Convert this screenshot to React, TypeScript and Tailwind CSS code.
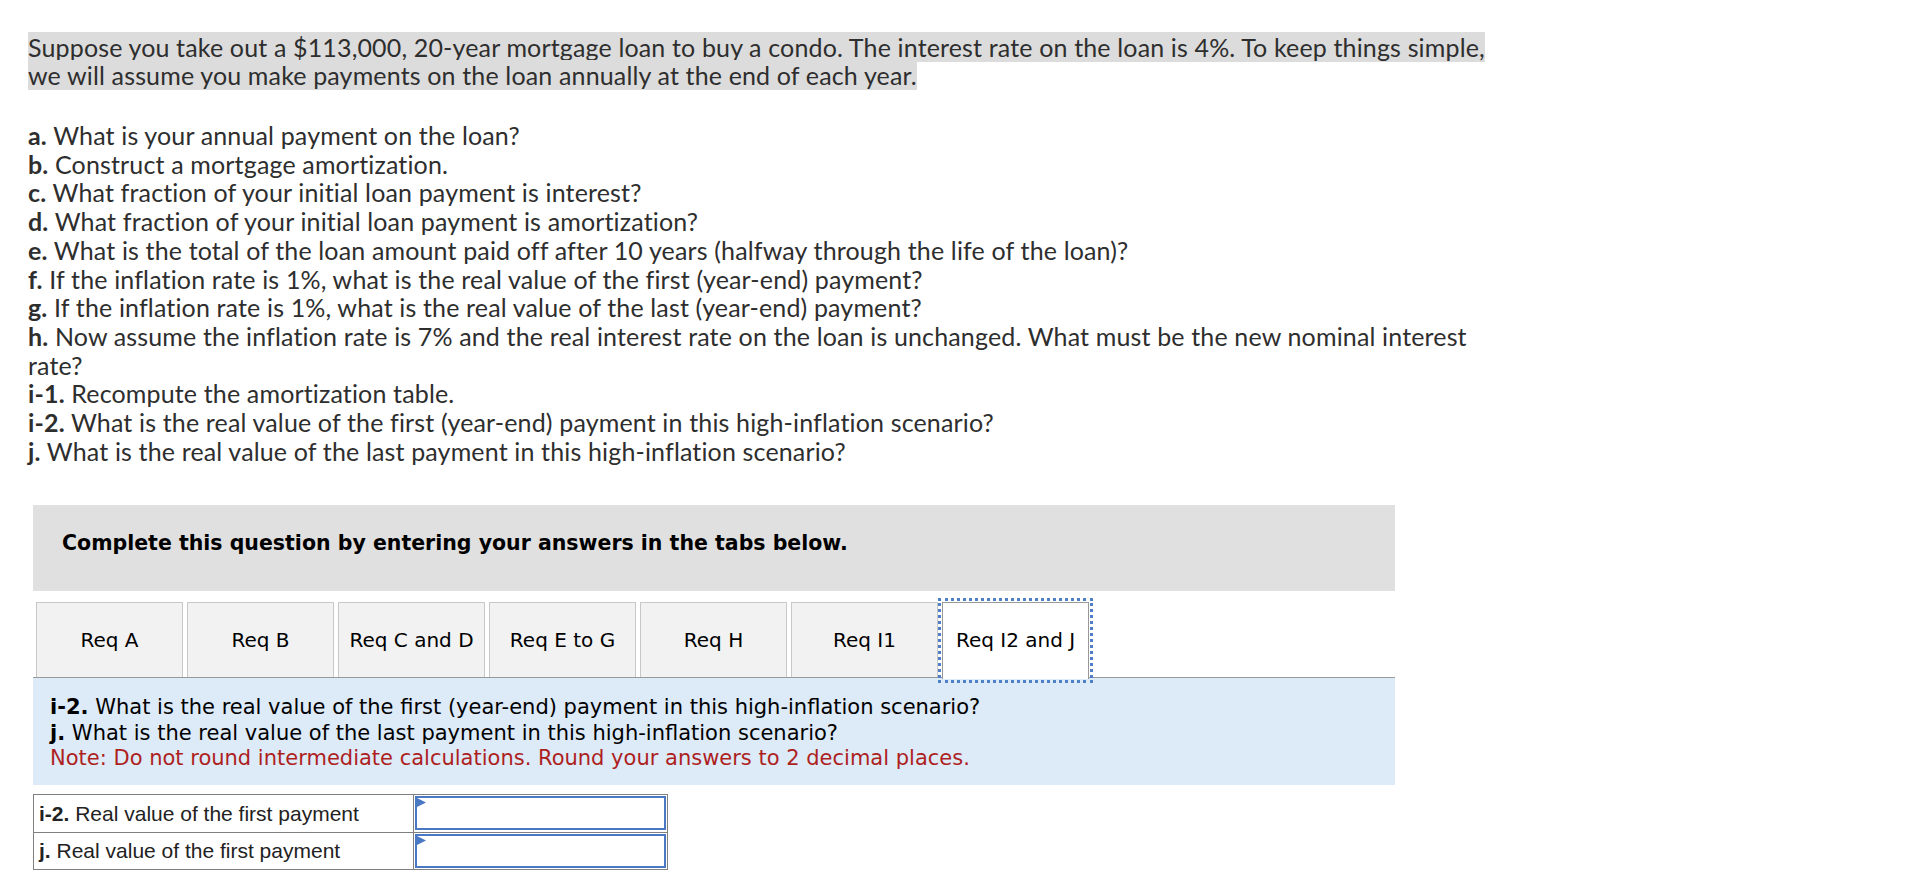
import React from "react";

const tabs = ["Req A", "Req B", "Req C and D", "Req E to G", "Req H", "Req I1", "Req I2 and J"];

function Line({ label, text }: { label: string; text: string }) {
  return (
    <div className="whitespace-nowrap">
      <span className="font-bold">{label}</span> {text}
    </div>
  );
}

function InputCell() {
  return (
    <td className="border border-[#808080] p-[1px] w-[254px]">
      <div className="relative h-[34px] border-2 border-[#4a78c2] bg-white">
        <svg className="absolute left-0 top-0" width="9" height="10" viewBox="0 0 9 10">
          <polygon points="0,0 9,4.5 0,9" fill="#4a78c2" />
        </svg>
      </div>
    </td>
  );
}

export default function App() {
  return (
    <div className="min-h-screen bg-white pl-[28px] pt-[34px]">
      <div className="font-['Lato',sans-serif] text-[25px] tracking-[0.15px] text-[#2e2e2e]">
        <p className="leading-[27.5px]">
          <span className="bg-[#dcdcdc]">
            Suppose you take out a $113,000, 20-year mortgage loan to buy a condo. The interest rate on the loan is 4%. To keep things simple,
            <br />
            we will assume you make payments on the loan annually at the end of each year.
          </span>
        </p>
        <div className="mt-[32px] leading-[28.7px]">
          <Line label="a." text="What is your annual payment on the loan?" />
          <Line label="b." text="Construct a mortgage amortization." />
          <Line label="c." text="What fraction of your initial loan payment is interest?" />
          <Line label="d." text="What fraction of your initial loan payment is amortization?" />
          <Line label="e." text="What is the total of the loan amount paid off after 10 years (halfway through the life of the loan)?" />
          <Line label="f." text="If the inflation rate is 1%, what is the real value of the first (year-end) payment?" />
          <Line label="g." text="If the inflation rate is 1%, what is the real value of the last (year-end) payment?" />
          <Line label="h." text="Now assume the inflation rate is 7% and the real interest rate on the loan is unchanged. What must be the new nominal interest" />
          <div>rate?</div>
          <Line label="i-1." text="Recompute the amortization table." />
          <Line label="i-2." text="What is the real value of the first (year-end) payment in this high-inflation scenario?" />
          <Line label="j." text="What is the real value of the last payment in this high-inflation scenario?" />
        </div>
      </div>

      <div className="ml-[5px] mt-[40px] w-[1362px] font-['DejaVu_Sans',sans-serif] text-black">
        <div className="h-[86px] bg-[#e0e0e0] pl-[29px] pt-[26px] text-[20.5px] font-bold leading-[24px]">
          Complete this question by entering your answers in the tabs below.
        </div>

        <div className="mt-[11px] flex gap-[4px] pl-[3px] text-[20px]">
          {tabs.map((t, i) => {
            const active = i === tabs.length - 1;
            return (
              <div
                key={t}
                className={
                  active
                    ? "relative z-10 mb-[-2px] flex h-[77px] w-[147px] items-center justify-center border border-b-0 border-[#999] bg-white pb-[2px] outline-[3px] outline-dotted outline-[#4f7fc6] outline-offset-[1px]"
                    : "flex h-[75px] w-[147px] items-center justify-center border border-b-0 border-[#c8c8c8] bg-[#f2f2f2]"
                }
              >
                {t}
              </div>
            );
          })}
        </div>

        <div className="border-t border-[#999] bg-[#ddeaf7] pb-[13px] pl-[17px] pt-[17px] text-[21px] leading-[25.5px]">
          <div>
            <span className="font-bold">i-2.</span> What is the real value of the first (year-end) payment in this high-inflation scenario?
          </div>
          <div>
            <span className="font-bold">j.</span> What is the real value of the last payment in this high-inflation scenario?
          </div>
          <div className="text-[#ad1f1f]">Note: Do not round intermediate calculations. Round your answers to 2 decimal places.</div>
        </div>

        <table className="mt-[9px] border-collapse font-['Liberation_Sans',Arial,sans-serif] text-[21px] text-[#222]">
          <tbody>
            <tr className="h-[38px]">
              <td className="w-[380px] border border-[#808080] pl-[5px]">
                <span className="font-bold">i-2.</span> Real value of the first payment
              </td>
              <InputCell />
            </tr>
            <tr className="h-[36px]">
              <td className="w-[380px] border border-[#808080] pl-[5px]">
                <span className="font-bold">j.</span> Real value of the first payment
              </td>
              <InputCell />
            </tr>
          </tbody>
        </table>
      </div>
    </div>
  );
}
